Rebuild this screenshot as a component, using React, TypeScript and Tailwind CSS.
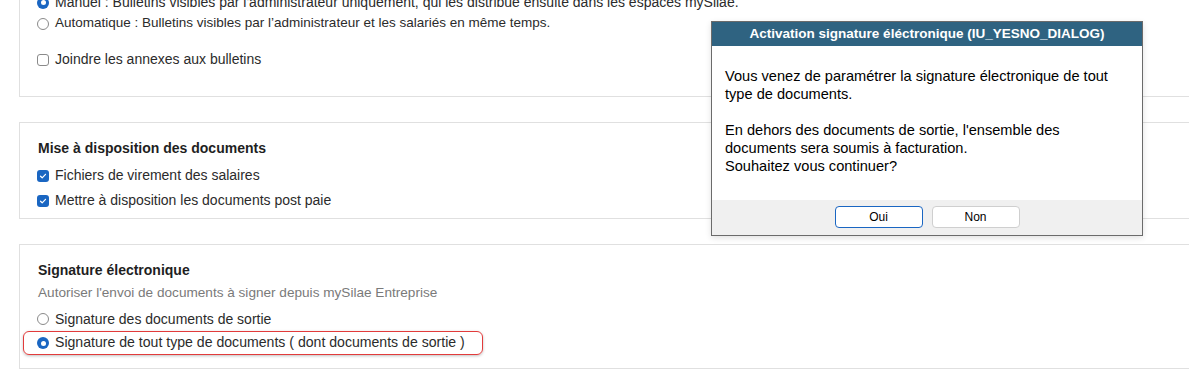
import React from 'react';

function Radio({ checked }: { checked?: boolean }) {
  if (checked) {
    return (
      <span className="w-[12px] h-[12px] rounded-full bg-[#1a66c2] flex items-center justify-center flex-shrink-0">
        <span className="w-[5px] h-[5px] rounded-full bg-white" />
      </span>
    );
  }
  return <span className="w-[12px] h-[12px] rounded-full border border-[#8a8a8a] bg-white flex-shrink-0" />;
}

function Checkbox({ checked }: { checked?: boolean }) {
  if (checked) {
    return (
      <span className="w-[12px] h-[12px] rounded-[3px] bg-[#1a66c2] flex items-center justify-center flex-shrink-0">
        <svg width="8" height="8" viewBox="0 0 8 8" fill="none">
          <path d="M1.5 4.2 L3.2 5.8 L6.5 2.3" stroke="white" strokeWidth="1.2" strokeLinecap="round" strokeLinejoin="round" />
        </svg>
      </span>
    );
  }
  return <span className="w-[12px] h-[12px] rounded-[3px] border border-[#8a8a8a] bg-white flex-shrink-0" />;
}

function Option({ children, h = 'h-[21px]' }: { children: React.ReactNode; h?: string }) {
  return <div className={`flex items-center gap-[6px] ${h}`}>{children}</div>;
}

function Dialog() {
  return (
    <div className="absolute left-[711px] top-[21px] w-[432px] h-[215px] border border-[#6b6b6b] bg-white flex flex-col shadow-[0_2px_6px_rgba(0,0,0,0.12)]">
      <div className="h-[24px] bg-[#2f6381] text-white font-bold text-[13.5px] flex items-center justify-center font-['Liberation_Sans',Arial,sans-serif]">
        Activation signature éléctronique (IU_YESNO_DIALOG)
      </div>
      <div className="flex-1 pl-[13px] pt-[21px] text-[14.6px] leading-[18px] text-black font-['Liberation_Sans',Arial,sans-serif]">
        <p>Vous venez de paramétrer la signature électronique de tout<br />type de documents.</p>
        <p className="mt-[18px]">
          En dehors des documents de sortie, l'ensemble des<br />documents sera soumis à facturation.<br />Souhaitez vous continuer?
        </p>
      </div>
      <div className="h-[35px] bg-[#f0f0f0] flex justify-center gap-[9px] pt-[6px] font-['Liberation_Sans',Arial,sans-serif]">
        <button className="w-[88px] h-[22px] rounded-[4px] border border-[#1a66c2] bg-white text-[12px] text-black">Oui</button>
        <button className="w-[88px] h-[22px] rounded-[4px] border border-[#cfcfcf] bg-white text-[12px] text-black">Non</button>
      </div>
    </div>
  );
}

export default function App() {
  return (
    <div className="relative w-[1189px] h-[388px] overflow-hidden bg-white text-[#2b2b2b] text-[14px] font-['Liberation_Sans',Arial,sans-serif]">
      <div className="pl-[19px]">
        {/* Bulletins */}
        <div className="-mt-[8px] border-l border-b border-[#e0e0e0] pl-[17px] pb-[26px]">
          <Option>
            <Radio checked />
            <span>Manuel : Bulletins visibles par l'administrateur uniquement, qui les distribue ensuite dans les espaces mySilae.</span>
          </Option>
          <Option>
            <Radio />
            <span className="text-[13.5px]">Automatique : Bulletins visibles par l’administrateur et les salariés en même temps.</span>
          </Option>
          <div className="mt-[15px]">
            <Option>
              <Checkbox />
              <span>Joindre les annexes aux bulletins</span>
            </Option>
          </div>
        </div>

        {/* Mise à disposition */}
        <div className="mt-[25px] border-l border-t border-b border-[#e0e0e0] pl-[17px] pt-[15px] pb-[5px]">
          <div className="h-[20px] flex items-center pl-[1px] font-bold text-[#1f1f1f]">Mise à disposition des documents</div>
          <div className="mt-[5px]">
            <Option h="h-[25px]">
              <Checkbox checked />
              <span>Fichiers de virement des salaires</span>
            </Option>
            <Option h="h-[25px]">
              <Checkbox checked />
              <span>Mettre à disposition les documents post paie</span>
            </Option>
          </div>
        </div>

        {/* Signature électronique */}
        <div className="mt-[25px] border-l border-t border-b border-[#e0e0e0] pl-[17px] pt-[15px] pb-[13px]">
          <div className="h-[20px] flex items-center pl-[1px] font-bold text-[#1f1f1f]">Signature électronique</div>
          <div className="mt-[3px] h-[20px] flex items-center pl-[1px] text-[#7a7a7a] text-[13.6px]">
            Autoriser l'envoi de documents à signer depuis mySilae Entreprise
          </div>
          <div className="mt-[4px]">
            <Option h="h-[24px]">
              <Radio />
              <span>Signature des documents de sortie</span>
            </Option>
            <div className="-ml-[14px] w-[460px] h-[24px] flex items-center gap-[6px] pl-[13px] rounded-[6px] border-[1.5px] border-[#e23b3b] shadow-[0_1px_3px_rgba(0,0,0,0.25)]">
              <Radio checked />
              <span className="text-[14.1px]">Signature de tout type de documents ( dont documents de sortie )</span>
            </div>
          </div>
        </div>
      </div>
      <Dialog />
    </div>
  );
}
